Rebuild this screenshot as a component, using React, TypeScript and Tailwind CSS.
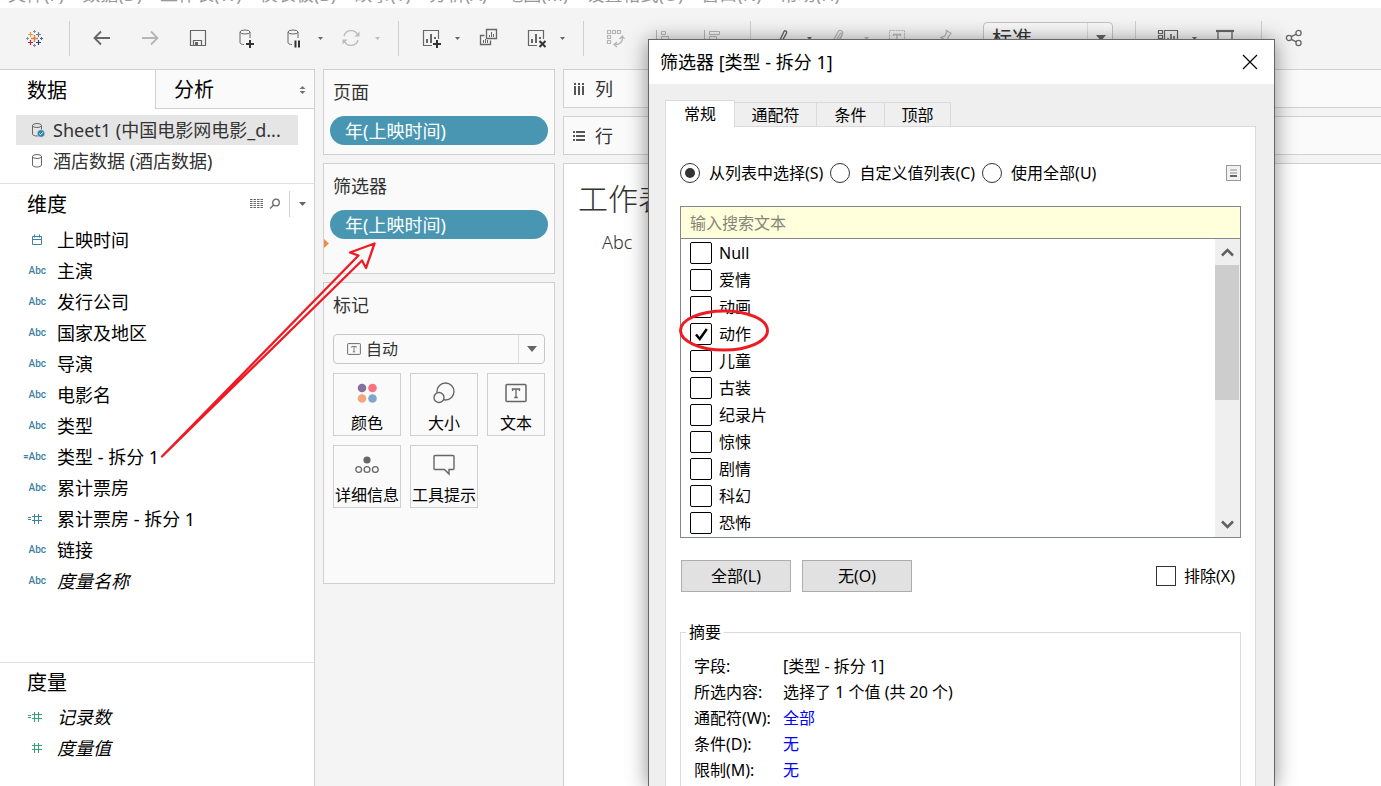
import { useState } from 'react'
import type { ReactNode } from 'react'

type FieldKind = 'date' | 'text' | 'number'

interface Field {
  name: string
  kind: FieldKind
  calculated?: boolean
  italic?: boolean
}

const menus = ['文件(F)', '数据(D)', '工作表(W)', '仪表板(B)', '故事(T)', '分析(A)', '地图(M)', '设置格式(O)', '窗口(N)', '帮助(H)']

const dimensions: Field[] = [
  { name: '上映时间', kind: 'date' },
  { name: '主演', kind: 'text' },
  { name: '发行公司', kind: 'text' },
  { name: '国家及地区', kind: 'text' },
  { name: '导演', kind: 'text' },
  { name: '电影名', kind: 'text' },
  { name: '类型', kind: 'text' },
  { name: '类型 - 拆分 1', kind: 'text', calculated: true },
  { name: '累计票房', kind: 'text' },
  { name: '累计票房 - 拆分 1', kind: 'number', calculated: true },
  { name: '链接', kind: 'text' },
  { name: '度量名称', kind: 'text', italic: true },
]

const measures: Field[] = [
  { name: '记录数', kind: 'number', calculated: true, italic: true },
  { name: '度量值', kind: 'number', italic: true },
]

const genres = ['Null', '爱情', '动画', '动作', '儿童', '古装', '纪录片', '惊悚', '剧情', '科幻', '恐怖']

/* ---------- icons ---------- */

function Icon({ children, className = 'text-[#666]' }: { children: ReactNode; className?: string }) {
  return (
    <svg width="24" height="24" viewBox="0 0 24 24" fill="none" stroke="currentColor" className={`shrink-0 ${className}`}>
      {children}
    </svg>
  )
}

function Caret({ className = 'text-[#666]' }: { className?: string }) {
  return (
    <svg width="7" height="4" viewBox="0 0 7 4" fill="currentColor" className={`shrink-0 ${className}`}>
      <path d="M0 0h7L3.5 4z" />
    </svg>
  )
}

function SmallCaret({ className }: { className: string }) {
  return (
    <svg width="5" height="3" viewBox="0 0 5 3" fill="currentColor" className={`shrink-0 ${className}`}>
      <path d="M0 0h5L2.5 3z" />
    </svg>
  )
}

function TableauLogo() {
  return (
    <Icon>
      <path d="M12.5 9v7M9 12.5h7" stroke="#eb7a3c" strokeWidth="1.4" />
      <path d="M8.5 6v5M6 8.5h5" stroke="#eb9c3c" strokeWidth="1.2" />
      <path d="M16.500 6v5M14 8.500h5" stroke="#5c8499" strokeWidth="1.2" />
      <path d="M8.5 14v5M6 16.500h5" stroke="#c72035" strokeWidth="1.2" />
      <path d="M16.500 14v5M14 16.500h5" stroke="#1f4a7d" strokeWidth="1.2" />
      <path d="M12.5 4v3M11 5.5h3" stroke="#6f9cac" />
      <path d="M12.5 18v3M11 19.5h3" stroke="#7a83b0" />
      <path d="M5.5 11v3M4 12.500h3" stroke="#6f9cac" />
      <path d="M19.500 11v3M18 12.500h3" stroke="#5b5f93" />
    </Icon>
  )
}

function ChartBox() {
  return (
    <>
      <path d="M13 19.5H4.5v-15h15V13" strokeWidth="1.2" />
      <path d="M8 17v-4M12 17V8M16 13V11" strokeWidth="2" />
    </>
  )
}

function Cylinder() {
  return (
    <>
      <ellipse cx="11" cy="6" rx="5" ry="2" />
      <path d="M6 6v10.500c0 1 1.500 2 4 2M16 6v6" />
    </>
  )
}

function DataSourceIcon({ active }: { active?: boolean }) {
  return (
    <svg width="16" height="18" viewBox="0 0 16 18" fill="none" stroke="#666" className="shrink-0">
      <ellipse cx="6" cy="4.5" rx="4.5" ry="2" />
      <path d="M1.5 4.5V13c0 1.200 2 2 4.500 2s4.500-.8 4.500-2V4.500" />
      {active && (
        <>
          <circle cx="10" cy="12.500" r="3.800" fill="#2f83a8" stroke="#e5e5e5" strokeWidth=".6" />
          <path d="M8.200 12.500l1.300 1.300 2.400-2.500" stroke="#fff" />
        </>
      )}
    </svg>
  )
}

function TextGlyph({ size }: { size: number }) {
  return (
    <svg width={size} height={size} viewBox="0 0 22 22" fill="none" stroke="#666" className="shrink-0">
      <rect x="1" y="2.5" width="20" height="17" rx="1" strokeWidth="1.5" />
      <path d="M7.5 9V7h7v2M11 7v8.500M9.200 15.500h3.600" strokeWidth="1.3" />
    </svg>
  )
}

function FieldIcon({ kind, calculated }: { kind: FieldKind; calculated?: boolean }) {
  if (kind === 'text') {
    return (
      <span className="font-[Roboto] text-[10px] font-medium leading-none">
        {calculated && '='}Abc
      </span>
    )
  }
  return (
    <svg width="20" height="14" viewBox="0 0 20 14" fill="none" stroke="currentColor">
      {kind === 'date' ? (
        <path d="M6.5 3.5h9v8h-9zM6.5 6.5h9M8.500 1.500v3M13.500 1.500v3" />
      ) : (
        <path d="M6 4.5h10M6 8.5h10M8.500 2v10M12.500 2v10" />
      )}
      {calculated && <path d="M2 5.500h3M2 7.500h3" />}
    </svg>
  )
}

/* ---------- toolbar ---------- */

function Tool({ label, children }: { label: string; children: ReactNode }) {
  return (
    <button type="button" aria-label={label} className="flex h-9 w-12 shrink-0 items-center justify-center">
      {children}
    </button>
  )
}

function ToolMenu({ label, dim }: { label: string; dim?: boolean }) {
  return (
    <button type="button" aria-label={label} className="flex h-9 w-[9px] shrink-0 items-center">
      <SmallCaret className={dim ? 'text-[#bbb]' : 'text-[#666]'} />
    </button>
  )
}

function Separator() {
  return <div className="mr-2 ml-3.5 h-[35px] w-px shrink-0 bg-[#d0d0d0]" />
}

function Toolbar() {
  return (
    <div className="flex h-[61px] shrink-0 items-center overflow-hidden bg-[#f4f4f4] pb-px">
      <button type="button" aria-label="开始页面" className="ml-2.5 flex h-9 w-12 shrink-0 items-center justify-center">
        <TableauLogo />
      </button>
      <div className="mr-2 ml-[11px] h-[35px] w-px shrink-0 bg-[#d0d0d0]" />
      <Tool label="撤消">
        <Icon>
          <path d="M20 12H4.500M11 5.500L4.500 12l6.500 6.500" strokeWidth="1.8" />
        </Icon>
      </Tool>
      <Tool label="重做">
        <Icon className="text-[#b5b5b5]">
          <path d="M4 12h15.500M13 5.500l6.500 6.500-6.500 6.500" strokeWidth="1.8" />
        </Icon>
      </Tool>
      <Tool label="保存">
        <Icon>
          <path d="M4.500 4.500h15v15h-15zM7.500 19.500v-5h8v5" strokeWidth="1.2" />
          <path d="M9 16h3v3H9z" fill="currentColor" stroke="none" />
        </Icon>
      </Tool>
      <Tool label="新建数据源">
        <Icon>
          <Cylinder />
          <path d="M16 14v8M12 18h8" stroke="#333" strokeWidth="2" />
        </Icon>
      </Tool>
      <Tool label="暂停自动更新">
        <Icon>
          <Cylinder />
          <path d="M13.500 14.500v7M17 14.500v7" stroke="#333" strokeWidth="2" />
        </Icon>
      </Tool>
      <ToolMenu label="自动更新选项" />
      <Tool label="运行更新">
        <Icon className="text-[#bbb]">
          <path d="M5 10a7.300 7.300 0 0 1 13.500-1.500M19 14a7.300 7.300 0 0 1-13.500 1.500" strokeWidth="1.4" />
          <path d="M20.500 5.500v5h-5zM3.500 18.500v-5h5z" fill="currentColor" stroke="none" />
        </Icon>
      </Tool>
      <ToolMenu label="更新选项" dim />
      <Separator />
      <Tool label="新建工作表">
        <Icon>
          <ChartBox />
          <path d="M18 14v8M14 18h8" stroke="#333" strokeWidth="2" />
        </Icon>
      </Tool>
      <ToolMenu label="新建选项" />
      <Tool label="复制工作表">
        <Icon>
          <path d="M10.500 3.500h10v9h-10zM8.500 9.500h-4v9h10v-4" strokeWidth="1.3" />
          <path d="M13.500 11V9M15.500 11V6M17.500 11V8M7.500 17v-3M9.500 17v-4M11.500 17v-3" />
        </Icon>
      </Tool>
      <Tool label="清除工作表">
        <Icon>
          <ChartBox />
          <path d="M15.500 15l6 6M21.500 15l-6 6" stroke="#333" strokeWidth="2" />
        </Icon>
      </Tool>
      <ToolMenu label="清除选项" />
      <Separator />
      <Tool label="交换行和列">
        <Icon className="text-[#b5b5b5]">
          <path d="M3.500 4.500h3v3h-3zM8.500 4.500h3v3h-3zM13.500 4.500h3v3h-3zM3.500 9.500h3v3h-3zM3.500 14.500h3v3h-3z" strokeWidth="1.2" />
          <path d="M18.500 11c0 5-3 7.500-7 7.500M15.500 13l3-3 2 3M13 16l-3 2.500 3 2.500" strokeWidth="1.3" />
        </Icon>
      </Tool>
      <Tool label="升序排序">
        <Icon className="text-[#b5b5b5]">
          <path d="M4.500 4v16M9.500 5.500h4v3h-4zM9.500 10.500h7v3h-7zM9.500 15.500h10v3h-10z" />
        </Icon>
      </Tool>
      <Tool label="降序排序">
        <Icon className="text-[#b5b5b5]">
          <path d="M4.500 4v16M9.500 5.500h10v3h-10zM9.500 10.500h7v3h-7zM9.500 15.500h4v3h-4z" />
        </Icon>
      </Tool>
      <Separator />
      <Tool label="突出显示">
        <Icon>
          <path d="M8 16L13 5.500c1-1.500 3.500 0 2.500 1.700L10 17l-3 2z" strokeWidth="1.4" />
        </Icon>
      </Tool>
      <ToolMenu label="突出显示选项" />
      <Tool label="组成员">
        <Icon className="text-[#b5b5b5]">
          <path d="M5 15l5-9c1.500-3 6-1 4.500 2L10 18M8 15l4-7c1-1.500 2.500-.5 2 .7L10 16" strokeWidth="1.3" />
        </Icon>
      </Tool>
      <ToolMenu label="分组选项" dim />
      <Tool label="显示标记标签">
        <Icon className="text-[#b5b5b5]">
          <path d="M4.500 4.500h15v15h-15z" strokeDasharray="2 1" />
          <path d="M8.500 10V8.500h7V10M12 8.500v7" strokeWidth="1.3" />
        </Icon>
      </Tool>
      <Tool label="固定轴">
        <Icon className="text-[#b5b5b5]">
          <path d="M12.500 4l6 3.500M14 5l-2 5-4 1.500 6.500 4 .5-4 3-4.500M11 14l-4 5" strokeWidth="1.3" />
        </Icon>
      </Tool>
      <div className="relative ml-3.5 h-[33px] w-[130px] shrink-0">
        <select
          aria-label="适合"
          className="h-full w-full appearance-none rounded-sm border border-[#c4c4c4] bg-[#f8f8f8] pl-2 text-[20px] leading-8 text-[#333]"
        >
          <option>标准</option>
        </select>
        <span className="pointer-events-none absolute inset-y-px right-0 flex w-[26px] items-center justify-center border-l border-[#ddd]">
          <svg width="10" height="6" viewBox="0 0 10 6" fill="#666">
            <path d="M0 0h10L5 6z" />
          </svg>
        </span>
      </div>
      <div className="mr-2 ml-[22px] h-[35px] w-px shrink-0 bg-[#d0d0d0]" />
      <Tool label="显示/隐藏卡">
        <Icon>
          <path d="M2.500 4.500h4v3h-4zM2.500 9.500h4v3h-4zM2.500 14.500h4v3h-4zM8.500 4.500h13v14h-13z" strokeWidth="1.2" />
          <path d="M12 16v-4M15 16V8M18 16v-6" strokeWidth="1.6" />
        </Icon>
      </Tool>
      <ToolMenu label="卡选项" />
      <Tool label="演示模式">
        <Icon>
          <path d="M3 5h18" strokeWidth="2.2" />
          <path d="M5 5v11h14V5" strokeWidth="1.3" />
        </Icon>
      </Tool>
      <div className="mr-2 ml-3 h-[35px] w-px shrink-0 bg-[#d0d0d0]" />
      <Tool label="共享">
        <Icon>
          <circle cx="7" cy="12" r="2.6" strokeWidth="1.3" />
          <circle cx="16.500" cy="7" r="2.600" strokeWidth="1.3" />
          <circle cx="16.500" cy="17" r="2.600" strokeWidth="1.3" />
          <path d="M9.300 10.700l5-2.500M9.300 13.300l5 2.500" strokeWidth="1.3" />
        </Icon>
      </Tool>
    </div>
  )
}

/* ---------- data pane ---------- */

function FieldList({ fields, color }: { fields: Field[]; color: string }) {
  return (
    <ul>
      {fields.map((f) => (
        <li key={f.name} className="flex h-[31px] items-center">
          <span className={`flex w-[46px] shrink-0 justify-end ${color}`}>
            <FieldIcon kind={f.kind} calculated={f.calculated} />
          </span>
          <span className={`ml-[11px] whitespace-nowrap text-lg text-black ${f.italic ? 'italic' : ''}`}>{f.name}</span>
        </li>
      ))}
    </ul>
  )
}

function DataPane() {
  return (
    <aside className="flex w-[315px] shrink-0 flex-col border-t border-r border-[#d0d0d0] bg-white">
      <div className="flex h-[39px] shrink-0 text-[20px] text-black">
        <button type="button" className="w-[155px] pt-0.5 pl-[27px] text-left">数据</button>
        <button
          type="button"
          className="flex flex-1 items-center justify-between border-b border-l border-[#d0d0d0] bg-[#fafafa] pt-0.5 pr-2 pl-[18px]"
        >
          分析
          <svg width="7" height="8" viewBox="0 0 7 8" fill="#6b7480">
            <path d="M3.500 0L6.500 3h-6zM3.500 8L.5 5h6z" />
          </svg>
        </button>
      </div>

      <div className="flex flex-col gap-px border-b border-[#e0e0e0] pt-1.5 pb-[7px] text-lg text-[#333]">
        <button type="button" className="mx-4 flex h-[30px] items-center bg-[#e5e5e5] pl-[15px]">
          <DataSourceIcon active />
          <span className="ml-1.5 truncate">Sheet1 (中国电影网电影_d...</span>
        </button>
        <button type="button" className="mx-4 flex h-[30px] items-center pl-[15px]">
          <DataSourceIcon />
          <span className="ml-1.5">酒店数据 (酒店数据)</span>
        </button>
      </div>

      <section className="pb-[66px]">
        <div className="flex h-10 items-center">
          <h2 className="flex-1 pt-0.5 pl-[27px] text-[20px] text-black">维度</h2>
          <button type="button" aria-label="查看数据" className="mr-1.5">
            <svg width="13" height="12" viewBox="0 0 13 12" stroke="#666">
              <path d="M0 1.500h13M0 3.500h13M0 5.500h13M0 7.500h13M0 9.500h13" strokeDasharray="2.5 1" />
            </svg>
          </button>
          <button type="button" aria-label="查找字段" className="mr-2">
            <svg width="12" height="12" viewBox="0 0 12 12" fill="none" stroke="#666" strokeWidth="1.3">
              <circle cx="7" cy="4.500" r="3.300" />
              <path d="M4.700 7L1 10.500" />
            </svg>
          </button>
          <button type="button" aria-label="字段菜单" className="flex h-[26px] w-[25px] items-center justify-center border-l border-[#d0d0d0]">
            <Caret />
          </button>
        </div>
        <FieldList fields={dimensions} color="text-[#3d82a0]" />
      </section>

      <section className="border-t border-[#e0e0e0]">
        <h2 className="flex h-[38px] items-center pt-0.5 pl-[27px] text-[20px] text-black">度量</h2>
        <FieldList fields={measures} color="text-[#35a178]" />
      </section>
    </aside>
  )
}

/* ---------- cards ---------- */

function Pill({ children }: { children: ReactNode }) {
  return (
    <button type="button" className="mx-1.5 flex h-[29px] items-center rounded-full bg-[#4996b2] pl-[15px] text-lg text-white">
      {children}
    </button>
  )
}

function Card({ title, className, children }: { title: string; className: string; children: ReactNode }) {
  return (
    <section className={`relative flex flex-col border border-[#d0d0d0] bg-[#fafafa] ${className}`}>
      <h3 className="mb-1 flex h-[42px] items-center pt-px pl-[9px] text-lg text-[#333]">{title}</h3>
      {children}
    </section>
  )
}

function MarkButton({ label, children }: { label: string; children: ReactNode }) {
  return (
    <button
      type="button"
      className="flex h-[63px] flex-col items-center justify-between border border-[#d0d0d0] pt-[7px] text-base whitespace-nowrap text-black"
    >
      <span className="flex h-6 items-center">{children}</span>
      {label}
    </button>
  )
}

function Cards() {
  return (
    <div className="flex w-[232px] shrink-0 flex-col gap-2">
      <Card title="页面" className="h-[86px]">
        <Pill>年(上映时间)</Pill>
      </Card>
      <Card title="筛选器" className="h-[111px]">
        <Pill>年(上映时间)</Pill>
        <svg width="5" height="9" viewBox="0 0 5 9" fill="#f08c46" className="absolute top-[75px] left-0">
          <path d="M0 0l5 4.500L0 9z" />
        </svg>
      </Card>
      <Card title="标记" className="h-[302px]">
        <div className="relative mx-[9px] mt-[5px] h-[30px]">
          <select
            aria-label="标记类型"
            className="h-full w-full appearance-none rounded-sm border border-[#c8c8c8] bg-[#fafafa] pl-8 text-base text-[#333]"
          >
            <option>自动</option>
          </select>
          <span className="pointer-events-none absolute inset-y-0 left-3.5 flex items-center">
            <TextGlyph size={14} />
          </span>
          <span className="pointer-events-none absolute inset-y-px right-0 flex w-[27px] items-center justify-center border-l border-[#ddd]">
            <svg width="10" height="6" viewBox="0 0 10 6" fill="#666">
              <path d="M0 0h10L5 6z" />
            </svg>
          </span>
        </div>
        <div className="mx-[9px] mt-[9px] grid grid-cols-[68px_68px_1fr] gap-[9px]">
          <MarkButton label="颜色">
            <svg width="20" height="20" viewBox="0 0 20 20">
              <circle cx="5" cy="5" r="4.300" fill="#86709c" />
              <circle cx="15.500" cy="5" r="4.300" fill="#fb7180" />
              <circle cx="5" cy="15.500" r="4.300" fill="#f4a77c" />
              <circle cx="15.500" cy="15.500" r="4.300" fill="#82a5ce" />
            </svg>
          </MarkButton>
          <MarkButton label="大小">
            <svg width="22" height="22" viewBox="0 0 22 22" fill="none" stroke="#666" strokeWidth="1.4">
              <circle cx="12.500" cy="9.500" r="8.500" />
              <circle cx="6" cy="15.500" r="5" fill="#fafafa" />
            </svg>
          </MarkButton>
          <MarkButton label="文本">
            <TextGlyph size={22} />
          </MarkButton>
          <MarkButton label="详细信息">
            <svg width="24" height="18" viewBox="0 0 24 18" fill="none" stroke="#666" strokeWidth="1.3">
              <circle cx="12" cy="4" r="3.600" fill="#666" stroke="none" />
              <circle cx="3.700" cy="13.500" r="2.900" />
              <circle cx="12" cy="13.500" r="2.900" />
              <circle cx="20.300" cy="13.500" r="2.900" />
            </svg>
          </MarkButton>
          <MarkButton label="工具提示">
            <svg width="22" height="22" viewBox="0 0 22 22" fill="none" stroke="#666" strokeWidth="1.4">
              <path d="M2 1.500h18q1 0 1 1v12q0 1-1 1h-4v4.500l-4.500-4.500H2q-1 0-1-1v-12q0-1 1-1z" />
            </svg>
          </MarkButton>
        </div>
      </Card>
    </div>
  )
}

/* ---------- worksheet ---------- */

function Shelf({ label, children }: { label: string; children: ReactNode }) {
  return (
    <div className="flex h-[39px] shrink-0 items-center border border-r-0 border-[#d0d0d0] bg-[#fafafa] pl-[9px] text-lg text-[#333]">
      <svg width="12" height="12" viewBox="0 0 12 12" stroke="#555" strokeWidth="2">
        {children}
      </svg>
      <span className="ml-2.5">{label}</span>
    </div>
  )
}

function Worksheet() {
  return (
    <main className="flex min-w-0 flex-1 flex-col gap-2">
      <Shelf label="列">
        <path d="M2 0v2M6 0v2M10 0v2M2 3v9M6 3v9M10 3v9" />
      </Shelf>
      <Shelf label="行">
        <path d="M0 2h2M0 6h2M0 10h2M3 2h9M3 6h9M3 10h9" />
      </Shelf>
      <div className="flex-1 border border-r-0 border-b-0 border-[#d0d0d0] bg-white pt-3 pl-3.5">
        <h1 className="text-[30px] leading-[46px] font-light whitespace-nowrap text-[#333]">工作表 1</h1>
        <p className="mt-2 pl-6 text-lg leading-6 font-light text-[#333]">Abc</p>
      </div>
    </main>
  )
}

/* ---------- filter dialog ---------- */

function GenreOption({ label, checked, onToggle }: { label: string; checked: boolean; onToggle: () => void }) {
  return (
    <label className="flex h-[27px] items-center gap-[7px] text-base text-black">
      <span className="relative flex h-[22px] w-[22px]">
        <input
          type="checkbox"
          checked={checked}
          onChange={onToggle}
          className="h-[22px] w-[22px] appearance-none rounded-[2px] border border-black bg-white"
        />
        {checked && (
          <svg width="22" height="22" viewBox="0 0 22 22" fill="none" stroke="#000" strokeWidth="2.5" className="pointer-events-none absolute inset-0">
            <path d="M6 11.500l3.800 4.500 7-10" />
          </svg>
        )}
      </span>
      {label}
    </label>
  )
}

function RadioOption({ label, checked, onSelect }: { label: string; checked: boolean; onSelect: () => void }) {
  return (
    <label className="flex items-center gap-[9px] whitespace-nowrap">
      <input
        type="radio"
        name="mode"
        checked={checked}
        onChange={onSelect}
        className="h-5 w-5 appearance-none rounded-full border border-[#333] bg-white bg-clip-content p-1 checked:bg-[#333]"
      />
      {label}
    </label>
  )
}

function FilterDialog() {
  const [mode, setMode] = useState('从列表中选择(S)')
  const [selected, setSelected] = useState(['动作'])

  const toggle = (genre: string) =>
    setSelected((cur) => (cur.includes(genre) ? cur.filter((g) => g !== genre) : [...cur, genre]))

  return (
    <div
      role="dialog"
      aria-label="筛选器"
      className="absolute top-[39px] bottom-0 left-[648px] flex w-[627px] flex-col overflow-hidden border border-b-0 border-[#666] bg-[#efefef] shadow-[0_2px_20px_rgba(0,0,0,0.45)]"
    >
      <div className="flex h-11 shrink-0 items-center justify-between bg-white pr-4 pl-[11px]">
        <h2 className="text-lg text-black">筛选器 [类型 - 拆分 1]</h2>
        <button type="button" aria-label="关闭">
          <svg width="16" height="16" viewBox="0 0 16 16" stroke="#000" strokeWidth="1.2">
            <path d="M1 1l14 14M15 1L1 15" />
          </svg>
        </button>
      </div>

      <div className="mx-4 mt-[15px] flex h-[27px] shrink-0 items-end text-base text-black">
        <button type="button" className="z-10 -mb-px h-[27px] w-[70px] border border-b-0 border-[#dadada] bg-white">
          常规
        </button>
        <button type="button" className="h-6 w-[82px] border-t border-r border-[#dadada]">通配符</button>
        <button type="button" className="h-6 w-[68px] border-t border-r border-[#dadada]">条件</button>
        <button type="button" className="h-6 w-[66px] border-t border-r border-[#dadada]">顶部</button>
      </div>

      <div className="mr-[18px] ml-4 shrink-0 border border-[#dadada] bg-white px-3.5 pt-[34px] pb-12 text-base text-black">
        <div className="flex h-6 items-center gap-[7px]">
          {['从列表中选择(S)', '自定义值列表(C)', '使用全部(U)'].map((m) => (
            <RadioOption key={m} label={m} checked={mode === m} onSelect={() => setMode(m)} />
          ))}
          <button type="button" aria-label="显示搜索" className="ml-auto">
            <svg width="15" height="16" viewBox="0 0 15 16" fill="none">
              <rect x=".5" y=".5" width="14" height="15" fill="#f2f2f2" stroke="#999" />
              <path d="M4 5h7M4 8h7" stroke="#c0c0c0" strokeWidth="2" />
              <path d="M4 11h7" stroke="#666" strokeWidth="2" />
            </svg>
          </button>
        </div>

        <div className="mt-[21px] border border-[#828790]">
          <input
            type="text"
            aria-label="搜索"
            placeholder="输入搜索文本"
            className="block h-8 w-full border-b border-[#828790] bg-[#ffffdc] px-[9px] text-base placeholder:text-[#848478] focus:outline-none"
          />
          <div className="flex h-[298px]">
            <div className="flex-1 overflow-hidden pl-[9px]">
              {genres.map((g) => (
                <GenreOption key={g} label={g} checked={selected.includes(g)} onToggle={() => toggle(g)} />
              ))}
            </div>
            <div className="flex w-[25px] flex-col bg-[#efefef]">
              <button type="button" aria-label="向上滚动" className="flex h-[26px] items-center justify-center">
                <svg width="13" height="9" viewBox="0 0 13 9" fill="none" stroke="#606060" strokeWidth="2.5">
                  <path d="M1 7.500L6.500 2 12 7.500" />
                </svg>
              </button>
              <div className="mr-px h-[135px] bg-[#cdcdcd]" />
              <button type="button" aria-label="向下滚动" className="mt-auto flex h-[26px] items-center justify-center">
                <svg width="13" height="9" viewBox="0 0 13 9" fill="none" stroke="#606060" strokeWidth="2.5">
                  <path d="M1 1.500L6.500 7 12 1.500" />
                </svg>
              </button>
            </div>
          </div>
        </div>

        <div className="mt-[22px] ml-px flex items-center gap-[11px]">
          <button type="button" className="h-8 w-[110px] border border-[#adadad] bg-[#e1e1e1]" onClick={() => setSelected(genres)}>
            全部(L)
          </button>
          <button type="button" className="h-8 w-[110px] border border-[#adadad] bg-[#e1e1e1]" onClick={() => setSelected([])}>
            无(O)
          </button>
          <label className="mr-1.5 ml-auto flex items-center gap-2">
            <input type="checkbox" className="h-5 w-5 appearance-none border border-[#333] bg-white" />
            排除(X)
          </label>
        </div>

        <fieldset className="mt-7 border border-[#dadada] px-[13px]">
          <legend className="-ml-2 px-[3px] leading-6">摘要</legend>
          <dl className="grid grid-cols-[89px_1fr] pt-[9px] pb-10 leading-[26px]">
            <dt>字段:</dt>
            <dd>[类型 - 拆分 1]</dd>
            <dt>所选内容:</dt>
            <dd>选择了 1 个值 (共 20 个)</dd>
            <dt>通配符(W):</dt>
            <dd><a href="#wildcard" className="text-[#0000ff]">全部</a></dd>
            <dt>条件(D):</dt>
            <dd><a href="#condition" className="text-[#0000ff]">无</a></dd>
            <dt>限制(M):</dt>
            <dd><a href="#limit" className="text-[#0000ff]">无</a></dd>
          </dl>
        </fieldset>
      </div>
    </div>
  )
}

/* hand drawn marks on top of the workspace */
function Annotations() {
  return (
    <svg width="780" height="470" viewBox="0 0 780 470" fill="none" stroke="#ed1c24" className="pointer-events-none absolute top-0 left-0">
      <path d="M162 456.500L358.500 255.500 350 252.500 374.500 243.500 366 268 362 260.500z" strokeWidth="2.3" strokeLinejoin="round" />
      <ellipse cx="724" cy="330.500" rx="43.500" ry="19.500" strokeWidth="3" />
    </svg>
  )
}

export default function App() {
  return (
    <div className="relative flex h-screen flex-col overflow-hidden bg-[#f4f4f4] font-['Noto_Sans','Noto_Sans_CJK_SC',sans-serif]">
      <nav className="flex h-2 shrink-0 items-end gap-[18px] overflow-hidden bg-white pl-2 text-lg leading-7 whitespace-nowrap text-[#999]">
        {menus.map((m) => (
          <button key={m} type="button">{m}</button>
        ))}
      </nav>
      <Toolbar />
      <div className="flex min-h-0 flex-1 gap-2">
        <DataPane />
        <Cards />
        <Worksheet />
      </div>
      <FilterDialog />
      <Annotations />
    </div>
  )
}
